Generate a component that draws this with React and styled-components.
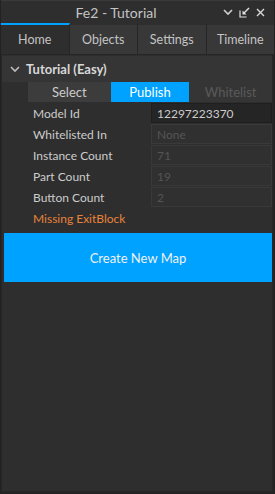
import React from 'react';
import styled, { createGlobalStyle } from 'styled-components';

const Global = createGlobalStyle`
  html, body {
    margin: 0;
    padding: 0;
    background: #2e2e2e;
  }
  * { box-sizing: border-box; }
`;

const Window = styled.div`
  width: 275px;
  height: 494px;
  display: flex;
  flex-direction: column;
  background: #2e2e2e;
  border: 1px solid #222;
  border-top: none;
  font-family: Lato, "Noto Sans", sans-serif;
  font-size: 12px;
  color: #cccccc;
  overflow: hidden;
`;

const TitleBar = styled.div`
  height: 23px;
  display: flex;
  align-items: center;
  background: #2e2e2e;
  border-top: 1px solid #3a3a3a;
`;

const Title = styled.div`
  flex: 1;
  text-align: center;
  font-size: 14px;
  color: #c4c4c4;
  padding-left: 8px;
`;

const TitleIcons = styled.div`
  display: flex;
  align-items: center;
  gap: 6px;
  padding-right: 9px;
  svg { display: block; }
`;

const Tabs = styled.div`
  display: flex;
  height: 31px;
`;

const Tab = styled.div`
  flex: 1;
  display: flex;
  align-items: center;
  justify-content: center;
  font-size: 12.5px;
  color: #c4c4c4;
  background: ${p => (p.active ? '#2e2e2e' : '#383838')};
  border-top: 2px solid ${p => (p.active ? '#00a2ff' : '#2e2e2e')};
  border-right: 1px solid #262626;
  &:last-child { border-right: none; }
`;

const Body = styled.div`
  flex: 1;
  display: flex;
  flex-direction: column;
  border-top: 1px solid #262626;
  border-left: 1px solid #262626;
  border-right: 2px solid #262626;
  border-bottom: 2px solid #262626;
`;

const SectionHeader = styled.div`
  display: flex;
  align-items: center;
  height: 26px;
  margin-top: 1px;
  padding-left: 8px;
  gap: 6px;
  background: #353535;
  font-weight: bold;
  font-size: 13px;
  color: #d8d8d8;
`;

const ModeRow = styled.div`
  display: flex;
  height: 20px;
  margin: 0 0 1px 26px;
`;

const ModeButton = styled.div`
  flex: ${p => p.grow};
  display: flex;
  align-items: center;
  justify-content: center;
  font-size: 13px;
  background: ${p => (p.active ? '#00a2ff' : p.disabled ? '#353535' : '#3c3c3c')};
  color: ${p => (p.active ? '#ffffff' : p.disabled ? '#5a5a5a' : '#cccccc')};
`;

const Rows = styled.div`
  display: flex;
  flex-direction: column;
  gap: 1px;
  padding-left: 31px;
`;

const Row = styled.div`
  display: flex;
  align-items: center;
  height: 20px;
`;

const Label = styled.div`
  width: 118px;
  color: ${p => (p.warn ? '#e8823c' : '#cccccc')};
`;

const Value = styled.div`
  flex: 1;
  height: 20px;
  display: flex;
  align-items: center;
  padding-left: 5px;
  background: ${p => (p.editable ? '#252525' : '#303030')};
  border: 1px solid ${p => (p.editable ? '#1f1f1f' : '#393939')};
  color: ${p => (p.editable ? '#cccccc' : '#555555')};
`;

const CreateButton = styled.div`
  margin: 5px 0 0 2px;
  height: 49px;
  display: flex;
  align-items: center;
  justify-content: center;
  background: #00a2ff;
  color: #f0f0f0;
  font-size: 13px;
`;

const Chevron = ({ color }) => (
  <svg width="10" height="7" viewBox="0 0 10 7">
    <path d="M1 1l4 4 4-4" fill="none" stroke={color} strokeWidth="1.6" />
  </svg>
);

const Dock = () => (
  <svg width="11" height="11" viewBox="0 0 11 11">
    <path d="M1 3.5v6.5h6.5" fill="none" stroke="#e0e0e0" strokeWidth="1.2" />
    <path d="M10 1L4.5 6.5" fill="none" stroke="#e0e0e0" strokeWidth="1.4" />
    <path d="M3.5 3.5v4h4z" fill="#e0e0e0" />
  </svg>
);

const Close = () => (
  <svg width="9" height="9" viewBox="0 0 9 9">
    <path d="M1 1l7 7M8 1l-7 7" stroke="#d8d8d8" strokeWidth="1.4" />
  </svg>
);

const fields = [
  ['Whitelisted In', 'None'],
  ['Instance Count', '71'],
  ['Part Count', '19'],
  ['Button Count', '2'],
];

export default function App() {
  return (
    <Window>
      <Global />
      <TitleBar>
        <Title>Fe2 - Tutorial</Title>
        <TitleIcons>
          <Chevron color="#cfcfcf" />
          <Dock />
          <Close />
        </TitleIcons>
      </TitleBar>
      <Tabs>
        <Tab active>Home</Tab>
        <Tab>Objects</Tab>
        <Tab>Settings</Tab>
        <Tab>Timeline</Tab>
      </Tabs>
      <Body>
        <SectionHeader>
          <Chevron color="#bdbdbd" />
          Tutorial (Easy)
        </SectionHeader>
        <ModeRow>
          <ModeButton grow={83}>Select</ModeButton>
          <ModeButton grow={79} active>Publish</ModeButton>
          <ModeButton grow={83} disabled>Whitelist</ModeButton>
        </ModeRow>
        <Rows>
          <Row>
            <Label>Model Id</Label>
            <Value editable>12297223370</Value>
          </Row>
          {fields.map(([label, value]) => (
            <Row key={label}>
              <Label>{label}</Label>
              <Value>{value}</Value>
            </Row>
          ))}
          <Row>
            <Label warn>Missing ExitBlock</Label>
          </Row>
        </Rows>
        <CreateButton>Create New Map</CreateButton>
      </Body>
    </Window>
  );
}
